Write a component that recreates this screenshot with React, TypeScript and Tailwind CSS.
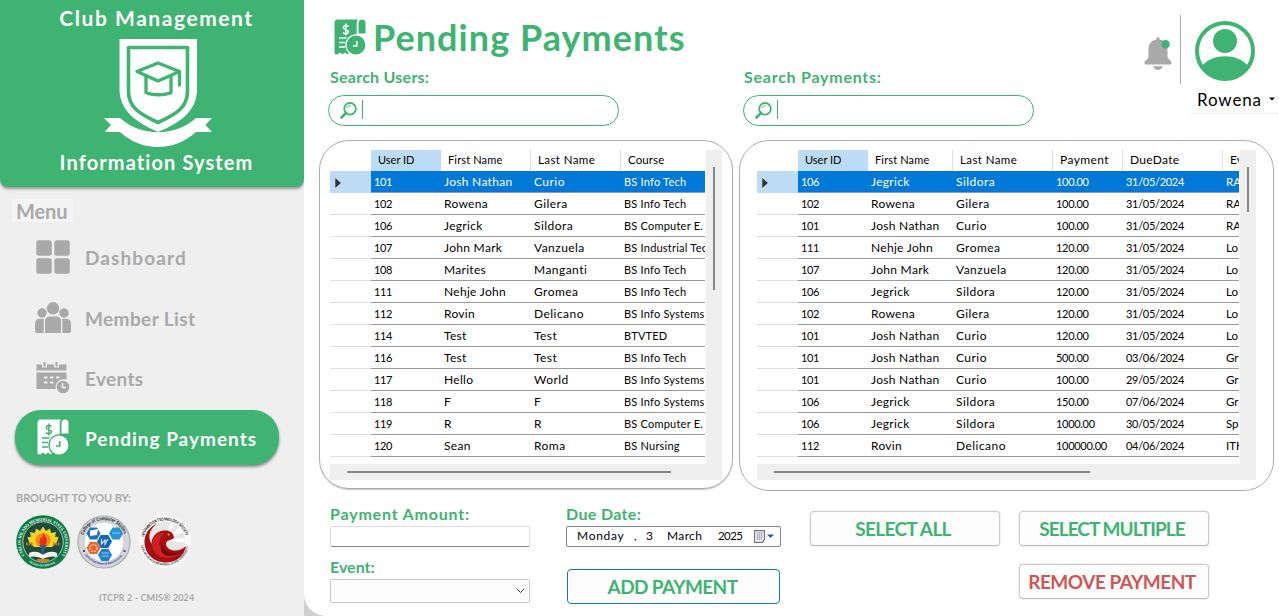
import type { ReactNode } from "react";

type Column = { label: string; head: string; cell: string; width: string };

const userColumns: Column[] = [
  { label: "User ID", width: "w-[70px]", head: "text-[11px]", cell: "pt-0.5 text-[11px] tracking-[-0.4px]" },
  { label: "First Name", width: "w-[90px]", head: "text-[11px] tracking-[0.15px]", cell: "pt-px text-[12px] tracking-[0.3px]" },
  { label: "Last Name", width: "w-[90px]", head: "pb-0.5 text-[11.5px] tracking-[0.4px]", cell: "pt-px text-[12px] tracking-[0.45px]" },
  { label: "Course", width: "w-[180px]", head: "pb-0.5 text-[11.5px] tracking-[0.1px]", cell: "pt-0.5 text-[11px] tracking-[0.22px]" },
];

const paymentColumns: Column[] = [
  { label: "User ID", width: "w-[70px]", head: "text-[11px]", cell: "pt-0.5 text-[11px] tracking-[-0.4px]" },
  { label: "First Name", width: "w-[85px]", head: "text-[11px] tracking-[0.15px]", cell: "pt-px text-[12px] tracking-[0.3px]" },
  { label: "Last Name", width: "w-[100px]", head: "pb-0.5 text-[11.5px] tracking-[0.4px]", cell: "pt-px text-[12px] tracking-[0.45px]" },
  { label: "Payment", width: "w-[70px]", head: "pb-0.5 text-[12px] tracking-[0.4px]", cell: "pt-0.5 text-[11px] tracking-[-0.3px]" },
  { label: "DueDate", width: "w-[100px]", head: "pb-0.5 text-[12px] tracking-[0.3px]", cell: "pt-0.5 text-[11px] tracking-[-0.3px]" },
  { label: "Event", width: "w-[90px]", head: "pb-0.5 text-[12px]", cell: "pt-px text-[11.5px]" },
];

const users = [
  ["101", "Josh Nathan", "Curio", "BS Info Tech"],
  ["102", "Rowena", "Gilera", "BS Info Tech"],
  ["106", "Jegrick", "Sildora", "BS Computer E."],
  ["107", "John Mark", "Vanzuela", "BS Industrial Tec"],
  ["108", "Marites", "Manganti", "BS Info Tech"],
  ["111", "Nehje John", "Gromea", "BS Info Tech"],
  ["112", "Rovin", "Delicano", "BS Info Systems"],
  ["114", "Test", "Test", "BTVTED"],
  ["116", "Test", "Test", "BS Info Tech"],
  ["117", "Hello", "World", "BS Info Systems"],
  ["118", "F", "F", "BS Info Systems"],
  ["119", "R", "R", "BS Computer E."],
  ["120", "Sean", "Roma", "BS Nursing"],
];

const payments = [
  ["106", "Jegrick", "Sildora", "100.00", "31/05/2024", "RA"],
  ["102", "Rowena", "Gilera", "100.00", "31/05/2024", "RA"],
  ["101", "Josh Nathan", "Curio", "100.00", "31/05/2024", "RA"],
  ["111", "Nehje John", "Gromea", "120.00", "31/05/2024", "Lo"],
  ["107", "John Mark", "Vanzuela", "120.00", "31/05/2024", "Lo"],
  ["106", "Jegrick", "Sildora", "120.00", "31/05/2024", "Lo"],
  ["102", "Rowena", "Gilera", "120.00", "31/05/2024", "Lo"],
  ["101", "Josh Nathan", "Curio", "120.00", "31/05/2024", "Lo"],
  ["101", "Josh Nathan", "Curio", "500.00", "03/06/2024", "Gr"],
  ["101", "Josh Nathan", "Curio", "100.00", "29/05/2024", "Gr"],
  ["106", "Jegrick", "Sildora", "150.00", "07/06/2024", "Gr"],
  ["106", "Jegrick", "Sildora", "1000.00", "30/05/2024", "Sp"],
  ["112", "Rovin", "Delicano", "100000.00", "04/06/2024", "ITH"],
];

function Crest() {
  return (
    <svg width="108" height="110" viewBox="0 0 108 110" className="mt-[7px] ml-[2px] shrink-0">
      <path d="M15.500 1H93V51C93 72 78 84 54 94C31 84 15.500 72 15.500 51Z" fill="#fff" />
      <path d="M24.500 9.500H83.500V53C83.500 69 73 76 54 84.500C35 76 24.500 69 24.500 53Z" fill="none" stroke="#3eb372" strokeWidth="3.600" strokeLinejoin="round" />
      <g fill="none" stroke="#3eb372" strokeWidth="3.300" strokeLinejoin="round" strokeLinecap="round">
        <path d="M33 33.500L54 25L75.500 33.500L54 43Z" />
        <path d="M42 38V54.500C48 57.500 61 57.500 67 54.500V38M75.500 34V47" />
      </g>
      <path d="M0 80H16C37 99 71 99 92 80H108L101.500 87L108 94H92C70 114 38 114 16 94H0.500L7 87Z" fill="#fff" />
    </svg>
  );
}

function ReceiptIcon({ className, cut }: { className: string; cut: string }) {
  return (
    <svg viewBox="0 0 32 36" className={className}>
      <path fill="currentColor" d="M3.500 0.500H24C22.800 2 22.700 4 22.700 5.500V15.300C15.500 15.500 11.700 20.500 11.700 26C11.700 30 13.300 33 15 34.500L13.500 35.500L11 33.500L8.500 35.500L6 33.500L3.500 35.500L0.500 35V4C0.500 2 1.500 0.500 3.500 0.500Z" />
      <path fill="currentColor" d="M24.500 4.500C24.500 2 25.800 0.500 28 0.500C30.200 0.500 31.500 2 31.500 4.500V14.500H24.500Z" />
      <circle cx="22" cy="26" r="10.600" fill={cut} />
      <circle cx="22" cy="26" r="9.400" fill="currentColor" />
      <g fill="none" stroke={cut} strokeWidth="1.500">
        <path d="M5 19H12.500M5 23.500H11M5 28H11M22.800 22V27H19" />
        <path d="M14.500 7.500C13 5.800 9.300 6.200 9.300 8.500C9.300 11 14.500 10 14.500 12.800C14.500 15 11 15.300 9 13.700M11.900 4.500V16.500" />
      </g>
    </svg>
  );
}

function DashboardIcon() {
  return (
    <svg viewBox="0 0 34 34" className="h-[34px] w-[34px]" fill="#a9a9a9">
      <rect x="0.300" y="0.300" width="15.500" height="15.500" rx="2.500" />
      <rect x="18.300" y="0.300" width="15.500" height="15.500" rx="2.500" />
      <rect x="0.300" y="18.300" width="15.500" height="15.500" rx="2.500" />
      <rect x="18.300" y="18.300" width="15.500" height="15.500" rx="2.500" />
    </svg>
  );
}

function MembersIcon() {
  return (
    <svg viewBox="0 0 36 31" className="h-[31px] w-9" fill="#a9a9a9">
      <circle cx="18" cy="6.300" r="6.200" />
      <circle cx="7" cy="11" r="4.700" />
      <circle cx="29" cy="11" r="4.700" />
      <path d="M10 31V19.500C10 16.500 11.500 14.500 15 14.500H21C24.500 14.500 26 16.500 26 19.500V31Z" />
      <path d="M8.700 31H2C0.800 31 0 30.200 0 29V21.500C0 18.500 2 16.800 5 16.800H9.200C8.800 17.800 8.700 18.500 8.700 19.500Z" />
      <path d="M27.300 31H34C35.200 31 36 30.200 36 29V21.500C36 18.500 34 16.800 31 16.800H26.800C27.200 17.800 27.300 18.500 27.300 19.500Z" />
    </svg>
  );
}

function EventsIcon() {
  return (
    <svg viewBox="0 0 34 32" className="h-8 w-[34px]">
      <path fill="#a9a9a9" d="M0.500 2.500H6V5.500H11V2.500H18V5.500H23V2.500H30.500V8.500H0.500ZM7.500 0H9.500V4.500H7.500ZM19.500 0H21.500V4.500H19.500ZM0.500 10.500H30.500V17.500C25 16.500 20.500 20 20 27H0.500Z" />
      <path fill="#efefef" d="M8 14.500H11.500V16.500H8ZM14 14.500H17.500V16.500H14ZM20 14.500H23.500V16.500H20ZM8 19.500H11.500V21.500H8ZM14 19.500H17.500V21.500H14Z" />
      <circle cx="27" cy="25" r="7.500" fill="#efefef" />
      <circle cx="27" cy="25" r="6.300" fill="#a9a9a9" />
      <path d="M26.500 21V25.500H30" fill="none" stroke="#efefef" strokeWidth="1.600" />
    </svg>
  );
}

function UniversitySeal() {
  return (
    <svg viewBox="0 0 54 54" className="h-[54px] w-[54px]">
      <circle cx="27" cy="27" r="26.800" fill="#0d7d45" />
      <circle cx="27" cy="27" r="20.200" fill="#1c4c3b" stroke="#f4f4ef" strokeWidth="0.700" />
      <path d="M13 27L11.500 22L15 22L14 17L19 18L20 13.500L24 16L27 11.500L30 16L34 13.500L35 18L40 17L39 22L42.500 22L41 27L36 32H18Z" fill="#f3d51d" />
      <circle cx="27" cy="25.500" r="7.500" fill="#f28a19" />
      <path d="M27 18C31 23 32 26 29.500 30H24.500C22 27 24.500 25 24.500 22L26 24Z" fill="#e32c24" />
      <path d="M10 29H17M37 29H44" stroke="#b87c35" strokeWidth="3" strokeDasharray="1.500 1" />
      <path d="M23.500 30H30.500L28.500 34V42H25.500V34Z" fill="#315b8b" />
      <path d="M13 38C19 35.500 24 37 27 40C30 37 36 35.500 41 38V42C36 40.500 31 42 27 44C23 42 18 40.500 13 42Z" fill="#f7f7f1" />
      <path d="M21 44H33V47H21Z" fill="#d67a26" />
      <path id="seal-top" d="M8.500 40.500A22.300 22.300 0 1 1 45.500 40.500" fill="none" />
      <path id="seal-bottom" d="M12 46.500A25 25 0 0 0 42 46.500" fill="none" />
      <text className="font-['Liberation_Serif',serif] text-[4.300px] font-bold" fill="#fff">
        <textPath href="#seal-top" textLength="96" lengthAdjust="spacingAndGlyphs">CARLOS HILADO MEMORIAL STATE UNIVERSITY</textPath>
      </text>
      <text className="font-['Liberation_Serif',serif] text-[3px] font-bold" fill="#fff">
        <textPath href="#seal-bottom" startOffset="4%" textLength="28" lengthAdjust="spacingAndGlyphs">NEGROS OCCIDENTAL</textPath>
      </text>
    </svg>
  );
}

function CollegeSeal() {
  return (
    <svg viewBox="0 0 54 54" className="h-[54px] w-[54px]">
      <circle cx="27" cy="27" r="26" fill="#d3d6d9" stroke="#a6a9ad" strokeWidth="1.200" />
      <circle cx="27" cy="27" r="19.800" fill="#fff" stroke="#b6bbc2" strokeWidth="0.600" />
      <path d="M9.500 18.500L13 12.500H20L23.500 18.500L20 24.500H13Z" fill="#1d70c2" />
      <path d="M13 15.500L21 14L20 20L13 21Z" fill="#fff" />
      <path d="M32 18.500L35.500 12.500H42.500L46 18.500L42.500 24.500H35.500Z" fill="#2494d8" />
      <path d="M20 26.500L23.700 20H31.300L35 26.500L31.300 33H23.700Z" fill="#1765b4" />
      <path d="M24.500 24V29L28 25V29L31 24" fill="none" stroke="#cfe8fa" strokeWidth="1.200" />
      <path d="M9.500 33L13 27H20L23.500 33L20 39H13Z" fill="#e9622a" />
      <circle cx="16.500" cy="33" r="3.600" fill="none" stroke="#f8c6a5" strokeWidth="1.500" strokeDasharray="2 1" />
      <path d="M21 40L24.500 34H31.500L35 40L31.500 46H24.500Z" fill="#1e82cb" />
      <path d="M24.500 38H32M24.500 41H32M35 18H43" stroke="#8fd0f2" strokeWidth="1.200" />
      <circle cx="7" cy="36" r="1.100" fill="#29298f" />
      <circle cx="47.500" cy="36" r="1.100" fill="#29298f" />
      <path id="college-top" d="M6.500 20A21.500 21.500 0 0 1 47.500 20" fill="none" />
      <path id="college-bottom" d="M8 40A23.500 23.500 0 0 0 46 40" fill="none" />
      <text className="font-['Liberation_Sans',sans-serif] text-[4.800px] font-bold" fill="#222">
        <textPath href="#college-top" textLength="53" lengthAdjust="spacingAndGlyphs">College of Computer Studies</textPath>
      </text>
      <text className="font-['Liberation_Sans',sans-serif] text-[3px] font-bold" fill="#29298f">
        <textPath href="#college-bottom" textLength="43" lengthAdjust="spacingAndGlyphs">Carlos Hilado Memorial State University</textPath>
      </text>
    </svg>
  );
}

function SocietySeal() {
  return (
    <svg viewBox="0 0 54 54" className="h-[54px] w-[54px]">
      <circle cx="27" cy="27" r="26" fill="#fafafa" />
      <circle cx="27" cy="27" r="20.500" fill="#e6e6e6" />
      <path d="M28 20L33 7L37 9L29 21ZM31 21L42 12L45 17L32 23ZM33 24L47 23V28L33 26Z" fill="#fff" />
      <path d="M19 8.500C10 13 6.500 20 6.500 27C6.500 39 16 47.500 28 47.500C38 47.500 46.500 41 48 31C44 35 38 36.500 33.500 35C29 33.500 26.500 29 29 26.500C31 24.500 35 25 36 22.500C35.500 17.500 31 15 26 15.500C18 16.500 13.500 22 13.500 29C9 21 12 14 19 8.500Z" fill="#a50f12" />
      <path d="M14 30C15 20 21 17 27 18C23 20 20 25 22 31C24 38 32 41 40 39C32 46 16 44 14 30Z" fill="#cf2022" />
      <path d="M24 29C25 37 35 40 43 36C37 43 26 42 23 36Z" fill="#74070b" />
      <circle cx="30.500" cy="19.500" r="0.900" fill="#f6c33b" />
      <path id="society-top" d="M6 22A21.600 21.600 0 0 1 48 22" fill="none" />
      <path id="society-bottom" d="M3 30A24.300 24.300 0 0 0 51 30" fill="none" />
      <text className="font-['Liberation_Sans',sans-serif] text-[4.400px] font-bold" fill="#111">
        <textPath href="#society-top" textLength="56" lengthAdjust="spacingAndGlyphs">INFORMATION TECHNOLOGY SOCIETY</textPath>
      </text>
      <text className="font-['Liberation_Sans',sans-serif] text-[3.200px]" fill="#444">
        <textPath href="#society-bottom" textLength="67" lengthAdjust="spacingAndGlyphs">CARLOS HILADO MEMORIAL STATE UNIVERSITY</textPath>
      </text>
    </svg>
  );
}

function NavItem({ icon, children }: { icon: ReactNode; children: ReactNode }) {
  return (
    <div className="flex h-[60.5px] items-center pl-[34px]">
      <div className="flex w-[38px] justify-center">{icon}</div>
      <span className="ml-[13px] pt-0.5">{children}</span>
    </div>
  );
}

function Sidebar() {
  return (
    <aside className="flex h-[616px] w-[304px] shrink-0 flex-col bg-[#efefef] font-bold text-[#a9a9a9]">
      <header className="flex h-[187px] flex-col items-center rounded-b-lg bg-[#3eb372] pt-[5px] pr-0 pl-[9px] text-white shadow-[0_2px_3px_#9a9a9a]">
        <h2 className="text-[21px] leading-[26px] tracking-[1.550px]">Club Management</h2>
        <Crest />
        <h2 className="mt-px text-[20px] leading-[26px] tracking-[1.100px]">Information System</h2>
      </header>
      <div className="mt-3 ml-3 h-[23px] w-[61px] bg-[#f4f4f4] pl-1 text-[20px] leading-[25px] tracking-[-0.100px]">Menu</div>
      <nav className="mt-[5px] flex flex-col text-[19px]">
        <NavItem icon={<DashboardIcon />}><span className="tracking-[1.100px]">Dashboard</span></NavItem>
        <NavItem icon={<MembersIcon />}><span className="tracking-[0.400px]">Member List</span></NavItem>
        <NavItem icon={<EventsIcon />}><span className="tracking-[0.350px]">Events</span></NavItem>
        <div className="ml-[15px] mt-px flex h-[55px] w-[264px] items-center rounded-[26px] bg-[#3eb372] pl-[22px] text-white shadow-[0_2px_3px_#8a8a8a]">
          <ReceiptIcon className="h-9 w-8" cut="#3eb372" />
          <span className="ml-4 pt-1 tracking-[1px]">Pending Payments</span>
        </div>
      </nav>
      <p className="mt-[26px] ml-4 text-[11px] leading-[14px] tracking-[-0.100px]">BROUGHT TO YOU BY:</p>
      <div className="mt-2.5 ml-4 flex gap-[7px]">
        <UniversitySeal />
        <CollegeSeal />
        <SocietySeal />
      </div>
      <p className="mt-[23px] ml-[99px] text-[9px] leading-[12px] tracking-[0.120px]">ITCPR 2 - CMIS® 2024</p>
    </aside>
  );
}

function SearchField() {
  return (
    <div className="flex h-[31px] w-[291px] items-center rounded-full border border-[#3eb372] pl-[11px]">
      <svg viewBox="0 0 17 17" className="h-[17px] w-[17px]" fill="none" stroke="#3eb372">
        <circle cx="10" cy="6.800" r="5.800" strokeWidth="1.800" />
        <path d="M6.800 6C7.500 4.300 9 3.600 10.700 3.800" strokeWidth="1" />
        <path d="M6 11L1.500 15.500" strokeWidth="2.600" strokeLinecap="round" />
      </svg>
      <div className="mb-0.5 ml-[5px] h-[19px] w-px bg-[#3eb372]" />
    </div>
  );
}

type GridProps = { columns: Column[]; rows: string[][]; gridWidth: string; vThumb: string; hThumb: string };

function DataGrid({ columns, rows, gridWidth, vThumb, hThumb }: GridProps) {
  return (
    <div className="flex w-fit flex-col text-black">
      <div className="flex h-[314px]">
        <div className={`overflow-hidden ${gridWidth}`}>
          <div className="flex h-[21px] w-max">
            <div className="w-[41px]" />
            {columns.map((c, i) => (
              <div key={c.label} className={`flex h-[21px] shrink-0 items-center pl-[7px] whitespace-nowrap ${c.width} ${c.head} ${i === 0 ? "bg-[#bbdcf4]" : i < columns.length - 1 ? "border-r border-[#e0e0e0]" : ""}`}>
                {c.label}
              </div>
            ))}
          </div>
          {rows.map((row, r) => (
            <div key={r} className="flex h-[22px] w-max">
              <div className={`flex w-[41px] items-center border-b pl-[5px] ${r === 0 ? "border-[#bbdcf4] bg-[#bbdcf4]" : "border-[#dedede]"}`}>
                {r === 0 && (
                  <svg viewBox="0 0 6 10" className="mt-0.5 h-2.5 w-1.5">
                    <path d="M0.300 0L5.800 5L0.300 10Z" fill="#333" />
                  </svg>
                )}
              </div>
              {row.map((value, i) => (
                <div key={i} className={`flex shrink-0 items-center border-b border-[#9a9a9a] pl-[3px] whitespace-nowrap ${columns[i].width} ${columns[i].cell} ${r === 0 ? "bg-[#0078d7] text-white" : ""}`}>
                  {value}
                </div>
              ))}
            </div>
          ))}
        </div>
        <div className="ml-px w-4 bg-[#efefef] pt-[17px]">
          <div className={`ml-[7px] w-0.5 bg-[#868686] ${vThumb}`} />
        </div>
      </div>
      <div className="h-4 bg-[#efefef] pt-[7px] pl-[17px]">
        <div className={`h-0.5 bg-[#868a86] ${hThumb}`} />
      </div>
    </div>
  );
}

function GridPanel({ className, children }: { className: string; children: ReactNode }) {
  return <section className={`rounded-[30px] border border-[#acacac] pt-[9px] ${className}`}>{children}</section>;
}

function Action({ className, children }: { className: string; children: ReactNode }) {
  return (
    <button className={`rounded-[4px] border bg-[#fdfdfd] pt-0.5 text-center text-[19px] font-bold ${className}`}>{children}</button>
  );
}

export default function App() {
  return (
    <div className="flex h-[616px] w-[1279px] overflow-hidden bg-[#d0d0d0] font-[Lato,sans-serif]">
      <Sidebar />
      <main className="flex h-[616px] w-[975px] flex-col rounded-bl-[22px] bg-white">
        <div className="flex h-[140px] shrink-0">
          <div className="w-[439px] pl-6">
            <div className="flex h-[67px] items-start pl-1.5 text-[#3eb372]">
              <ReceiptIcon className="mt-[19px] h-9 w-8" cut="#fff" />
              <h1 className="mt-[15px] ml-[7px] text-[36px] leading-[44px] font-bold tracking-[1.050px] whitespace-nowrap">Pending Payments</h1>
            </div>
            <h3 className="mb-2 pl-0.5 text-[16px] leading-5 font-bold tracking-[0.250px] text-[#3eb372]">Search Users:</h3>
            <SearchField />
          </div>
          <div className="w-[400px] pt-[67px]">
            <h3 className="mb-2 pl-px text-[16px] leading-5 font-bold tracking-[0.750px] text-[#3eb372]">Search Payments:</h3>
            <SearchField />
          </div>
          <svg viewBox="0 0 28 34" className="mt-[37px] ml-px h-[34px] w-7 shrink-0">
            <path d="M14 0C15 0 15.600 0.700 15.600 2.500C20.500 3.300 23.500 7 23.500 12V19.500C23.500 22 27.500 23.500 27.500 26C27.500 27.200 27 27.600 26 27.600H2C1 27.600 0.500 27.200 0.500 26C0.500 23.500 4.500 22 4.500 19.500V12C4.500 7 7.500 3.300 12.400 2.500C12.400 0.700 13 0 14 0ZM9 29.300H19C18 31.700 16 33 14 33C12 33 10 31.700 9 29.300Z" fill="#a9a9a9" />
            <circle cx="21.500" cy="7.200" r="4.200" fill="#3eb372" />
          </svg>
          <div className="mt-[15px] ml-2 h-[69px] w-px shrink-0 bg-[#a9a9a9]" />
          <div className="flex flex-col pt-[21px] pl-[10px]">
            <svg viewBox="0 0 60 60" className="ml-1 h-[60px] w-[60px]">
              <defs>
                <clipPath id="avatar-clip"><circle cx="30" cy="30" r="29" /></clipPath>
              </defs>
              <circle cx="30" cy="30" r="28" fill="#fff" stroke="#3eb372" strokeWidth="4" />
              <circle cx="30" cy="20" r="12" fill="#3eb372" />
              <path d="M7 45C17 32 43 32 53 45L50 60H10Z" fill="#3eb372" clipPath="url(#avatar-clip)" />
            </svg>
            <div className="mt-[5px] flex h-7 w-[88px] items-center border-b border-[#eeeeee] pl-1.5 text-[17px] text-black">
              <span className="w-[72px] shrink-0 tracking-[0.850px]">Rowena</span>
              <svg viewBox="0 0 6 4" className="mt-[-2px] h-1 w-[6px] shrink-0"><path d="M0 0.500H6L3 3.500Z" fill="#000" /></svg>
            </div>
          </div>
        </div>

        <div className="flex h-[351px] shrink-0 gap-1.5 pl-[15px]">
          <GridPanel className="h-[349px] w-[414px] pl-[10px] shadow-[0_1px_1px_#c4c4c4]">
            <DataGrid columns={userColumns} rows={users} gridWidth="w-[375px]" vThumb="h-[123px]" hThumb="w-[324px]" />
          </GridPanel>
          <GridPanel className="h-[351px] w-[535px] pl-[17px]">
            <DataGrid columns={paymentColumns} rows={payments} gridWidth="w-[482px]" vThumb="h-[45px]" hThumb="w-[316px]" />
          </GridPanel>
        </div>

        <div className="flex pl-[26px] text-[#3eb372]">
          <div className="w-[236px] pt-[13px] font-bold">
            <label className="block h-[22px] text-[16px] leading-5 tracking-[0.800px]">Payment Amount:</label>
            <div className="h-[21px] w-[200px] rounded-[2px] border border-[#dddddd] border-b-[#868686]" />
            <label className="mt-[9px] block h-[23px] text-[16px] leading-[22px]">Event:</label>
            <div className="flex h-6 w-[200px] items-center justify-end rounded-[2px] border border-[#c8c8c8] bg-[#fdfdfd] pr-1">
              <svg viewBox="0 0 9 6" className="h-1.5 w-[9px]" fill="none" stroke="#444"><path d="M0.800 0.800L4.500 4.500L8.200 0.800" /></svg>
            </div>
          </div>
          <div className="w-[244px] pt-[13px]">
            <label className="block h-[22px] text-[16px] leading-5 font-bold tracking-[0.350px]">Due Date:</label>
            <div className="flex h-[21px] w-[215px] items-center rounded-[2px] border border-[#868686] pl-[10px] text-[12px] text-black">
              <span className="w-[57px] pb-0.5 tracking-[0.700px]">Monday</span>
              <span className="w-3 pb-0.5">,</span>
              <span className="w-[21px] pb-0.5">3</span>
              <span className="w-[51px] pb-0.5 tracking-[0.350px]">March</span>
              <span className="w-9 pb-px text-[11.500px] tracking-[-0.600px]">2025</span>
              <svg viewBox="0 0 20 13" className="h-[13px] w-5">
                <path d="M0.600 0.600H10.400V9.500L8.500 12.400H0.600Z" fill="#fff" stroke="#786f6f" strokeWidth="1.200" />
                <path d="M2 3H9M2 5H9M2 7H9M2 9H8M3.500 2V10.500M5.500 2V10.500M7.500 2V10.500" stroke="#9eaabd" strokeWidth="0.800" />
                <path d="M13 4.500H20L16.500 8Z" fill="#40598c" />
              </svg>
            </div>
            <Action className="mt-[22px] ml-px h-[35px] w-[213px] border-[#1773c0] pr-0.5 tracking-[-0.600px]">ADD PAYMENT</Action>
          </div>
          <div className="w-[209px] pt-5">
            <Action className="h-[35px] w-[190px] border-[#cccccc] border-b-[#bbbbbb] pr-1 tracking-[-0.650px] ring-1 ring-[#f1f1f1]">SELECT ALL</Action>
          </div>
          <div className="flex flex-col gap-[18px] pt-5">
            <Action className="h-[35px] w-[190px] border-[#cccccc] border-b-[#bbbbbb] pr-1 tracking-[-0.950px] ring-1 ring-[#f1f1f1]">SELECT MULTIPLE</Action>
            <Action className="h-[35px] w-[190px] border-[#cccccc] border-b-[#bbbbbb] pr-1 tracking-[-0.500px] text-[#cd5757] ring-1 ring-[#f1f1f1]">REMOVE PAYMENT</Action>
          </div>
        </div>
      </main>
    </div>
  );
}
